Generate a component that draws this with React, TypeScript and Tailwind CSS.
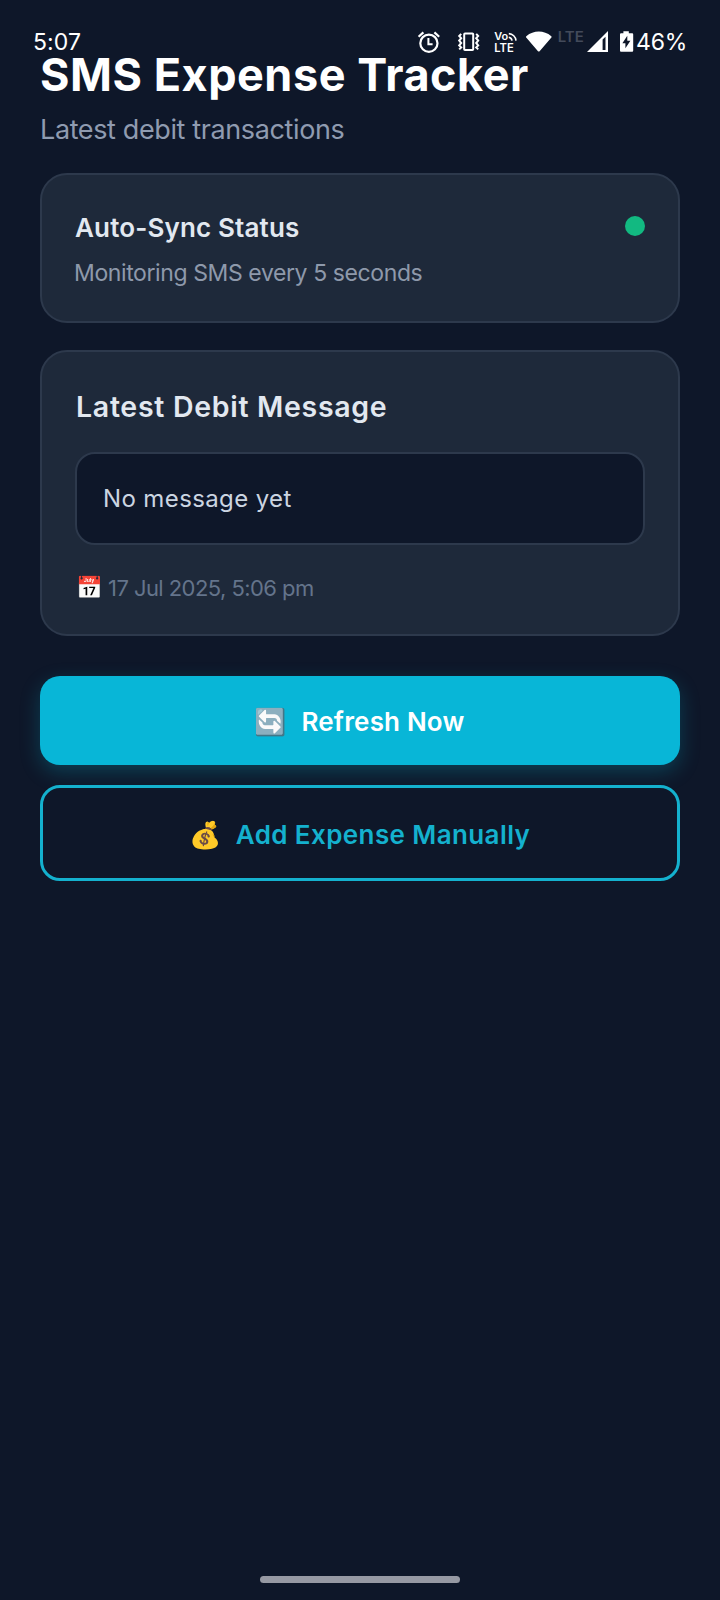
import type { ReactNode } from "react";

function StatusBar() {
  return (
    <div className="absolute inset-x-0 top-[27px] flex h-[30px] items-center pl-[33px] text-[23px] leading-[30px] text-white">
      <span className="w-[384px] tracking-[0.1px]">5:07</span>
      <svg className="h-6 w-6 shrink-0" viewBox="417 30 24 24" fill="none" stroke="white" strokeWidth="2.2">
        <circle cx="428.9" cy="43.2" r="8.6" />
        <path d="M428.4 38v6.2h4.2" strokeWidth="2" />
        <path d="M418.6 36.8l4.8-4.4M434.4 32.4l4.8 4.4" />
      </svg>
      <svg className="ml-[15px] h-6 w-6 shrink-0" viewBox="456 30 24 24" fill="none" stroke="white">
        <rect x="464.2" y="33.4" width="9" height="16.6" rx="0.8" strokeWidth="2" />
        <path d="M461.2 33.8l-2 2.2 2 2.2-2 2.4 2 2.4-2 2.4 2 2-2 2M476.2 33.8l2 2.2-2 2.2 2 2.4-2 2.4 2 2.4-2 2 2 2" strokeWidth="2" />
      </svg>
      <svg className="ml-[13px] h-6 w-6 shrink-0" viewBox="493 30 24 24" fill="none" stroke="white" strokeWidth="1.6">
        <text x="494.2" y="39.9" textLength="14" lengthAdjust="spacingAndGlyphs" fill="white" stroke="none" fontSize="10" fontWeight="600">Vo</text>
        <text x="494.2" y="51.8" textLength="19.5" lengthAdjust="spacingAndGlyphs" fill="white" stroke="none" fontSize="11.5" fontWeight="600">LTE</text>
        <path d="M508.8 37.2a4 4 0 0 1 3.2 3.4M508.8 33.6a7.6 7.6 0 0 1 7.2 7" />
      </svg>
      <svg className="ml-2 h-6 w-[28px] shrink-0" viewBox="525 30 28 24" fill="white">
        <path d="M526.3 36.2c7.4-6.2 17.6-6.2 25 0 .5.4.5.9.1 1.3L539.6 51.2c-.5.5-1.1.5-1.6 0L526.2 37.5c-.4-.4-.4-.9.1-1.3z" />
      </svg>
      <svg className="ml-1 h-6 w-[28px] shrink-0 overflow-visible" viewBox="557 30 28 24">
        <text x="557.8" y="42" textLength="26" lengthAdjust="spacingAndGlyphs" fill="#434a5a" fontSize="14.5" fontWeight="600">LTE</text>
      </svg>
      <svg className="ml-px h-6 w-6 shrink-0" viewBox="586 30 24 24" fill="white" fillRule="evenodd">
        <path d="M587 52L608 31v21zM602.6 39.6v10.3h2.9V36.7z" />
      </svg>
      <svg className="ml-[9px] h-6 w-4 shrink-0" viewBox="619 30 16 24" fill="white" fillRule="evenodd">
        <path d="M623.4 33.2v-2h5.4v2h3c.9 0 1.4.5 1.4 1.4v15.8c0 .9-.5 1.4-1.4 1.4h-10.4c-.9 0-1.4-.5-1.4-1.4V34.6c0-.9.5-1.4 1.4-1.4zM627.3 35.8l-4.9 7.4h3v5l5-7.4h-3.1z" />
      </svg>
      <span className="ml-[1px] tracking-[-0.2px]">46%</span>
    </div>
  );
}

function Card({ className, children }: { className: string; children: ReactNode }) {
  return <section className={`rounded-[27px] border-2 border-[#2d394c] bg-[#1e293a] px-[33px] ${className}`}>{children}</section>;
}

function Emoji({ className, children }: { className: string; children: string }) {
  return <span className={`flex shrink-0 justify-center font-['Noto_Color_Emoji'] ${className}`}>{children}</span>;
}

export default function App() {
  return (
    <div className="relative flex h-[1600px] w-full flex-col overflow-hidden bg-[#0e1729] font-['Inter',sans-serif]">
      <StatusBar />
      <main className="flex flex-col px-10 pt-[47px]">
        <h1 className="text-[45px] leading-[56px] font-bold tracking-[0.53px] whitespace-nowrap text-white">SMS Expense Tracker</h1>
        <p className="mt-[9px] text-[27px] leading-9 tracking-[-0.38px] text-[#8f9bb0]">Latest debit transactions</p>

        <Card className="mt-[25px] flex h-[150px] justify-between pt-[37px]">
          <div>
            <h2 className="text-[26px] leading-8 font-semibold tracking-[0.15px] text-[#e2e8f0]">Auto-Sync Status</h2>
            <p className="mt-3.5 -ml-px text-[23px] leading-[30px] tracking-[-0.4px] text-[#8e99ab]">Monitoring SMS every 5 seconds</p>
          </div>
          <span className="mt-1 size-[20px] rounded-full bg-[#12b981]" />
        </Card>

        <Card className="mt-[27px] h-[286px] pt-[37px]">
          <h2 className="ml-px text-[28.5px] leading-9 font-semibold tracking-[0.7px] text-[#e2e8f0]">Latest Debit Message</h2>
          <div className="mt-[27px] flex h-[93px] items-center rounded-[20px] border-2 border-[#2d394c] bg-[#0e1729] pl-[26px]">
            <p className="text-2xl leading-[30px] tracking-[0.38px] text-[#cbd5e1]">No message yet</p>
          </div>
          <p className="mt-7 flex items-center gap-1.5 text-[22px] leading-7 text-[#64748b]">
            <Emoji className="ml-0.5 w-[25px] pt-px text-[21.5px]">📅</Emoji>
            <span className="tracking-[-0.56px]">17 Jul 2025, 5:06 pm</span>
          </p>
        </Card>

        <button className="mt-10 flex h-[89px] items-center justify-center gap-4 rounded-[20px] bg-[#08b6d7] pt-0.5 text-[26px] leading-8 font-semibold text-white shadow-[0_7px_20px_rgba(6,182,212,0.25)]">
          <Emoji className="w-[30px] text-[26px]">🔄</Emoji>
          <span className="tracking-[0.18px]">Refresh Now</span>
        </button>
        <button className="relative mt-5 flex h-[96px] items-center justify-center gap-4 rounded-[20px] border-3 border-[#14b1ce] bg-[#0e1729] pt-[3px] pl-0.5 text-[26px] leading-8 font-semibold text-[#14b1ce]">
          <Emoji className="w-[28px] text-[26px]">💰</Emoji>
          <span className="tracking-[0.4px]">Add Expense Manually</span>
        </button>
      </main>
      <div className="mt-auto mb-[17px] h-[7px] w-[200px] self-center rounded-full bg-[#9699a3]" />
    </div>
  );
}
